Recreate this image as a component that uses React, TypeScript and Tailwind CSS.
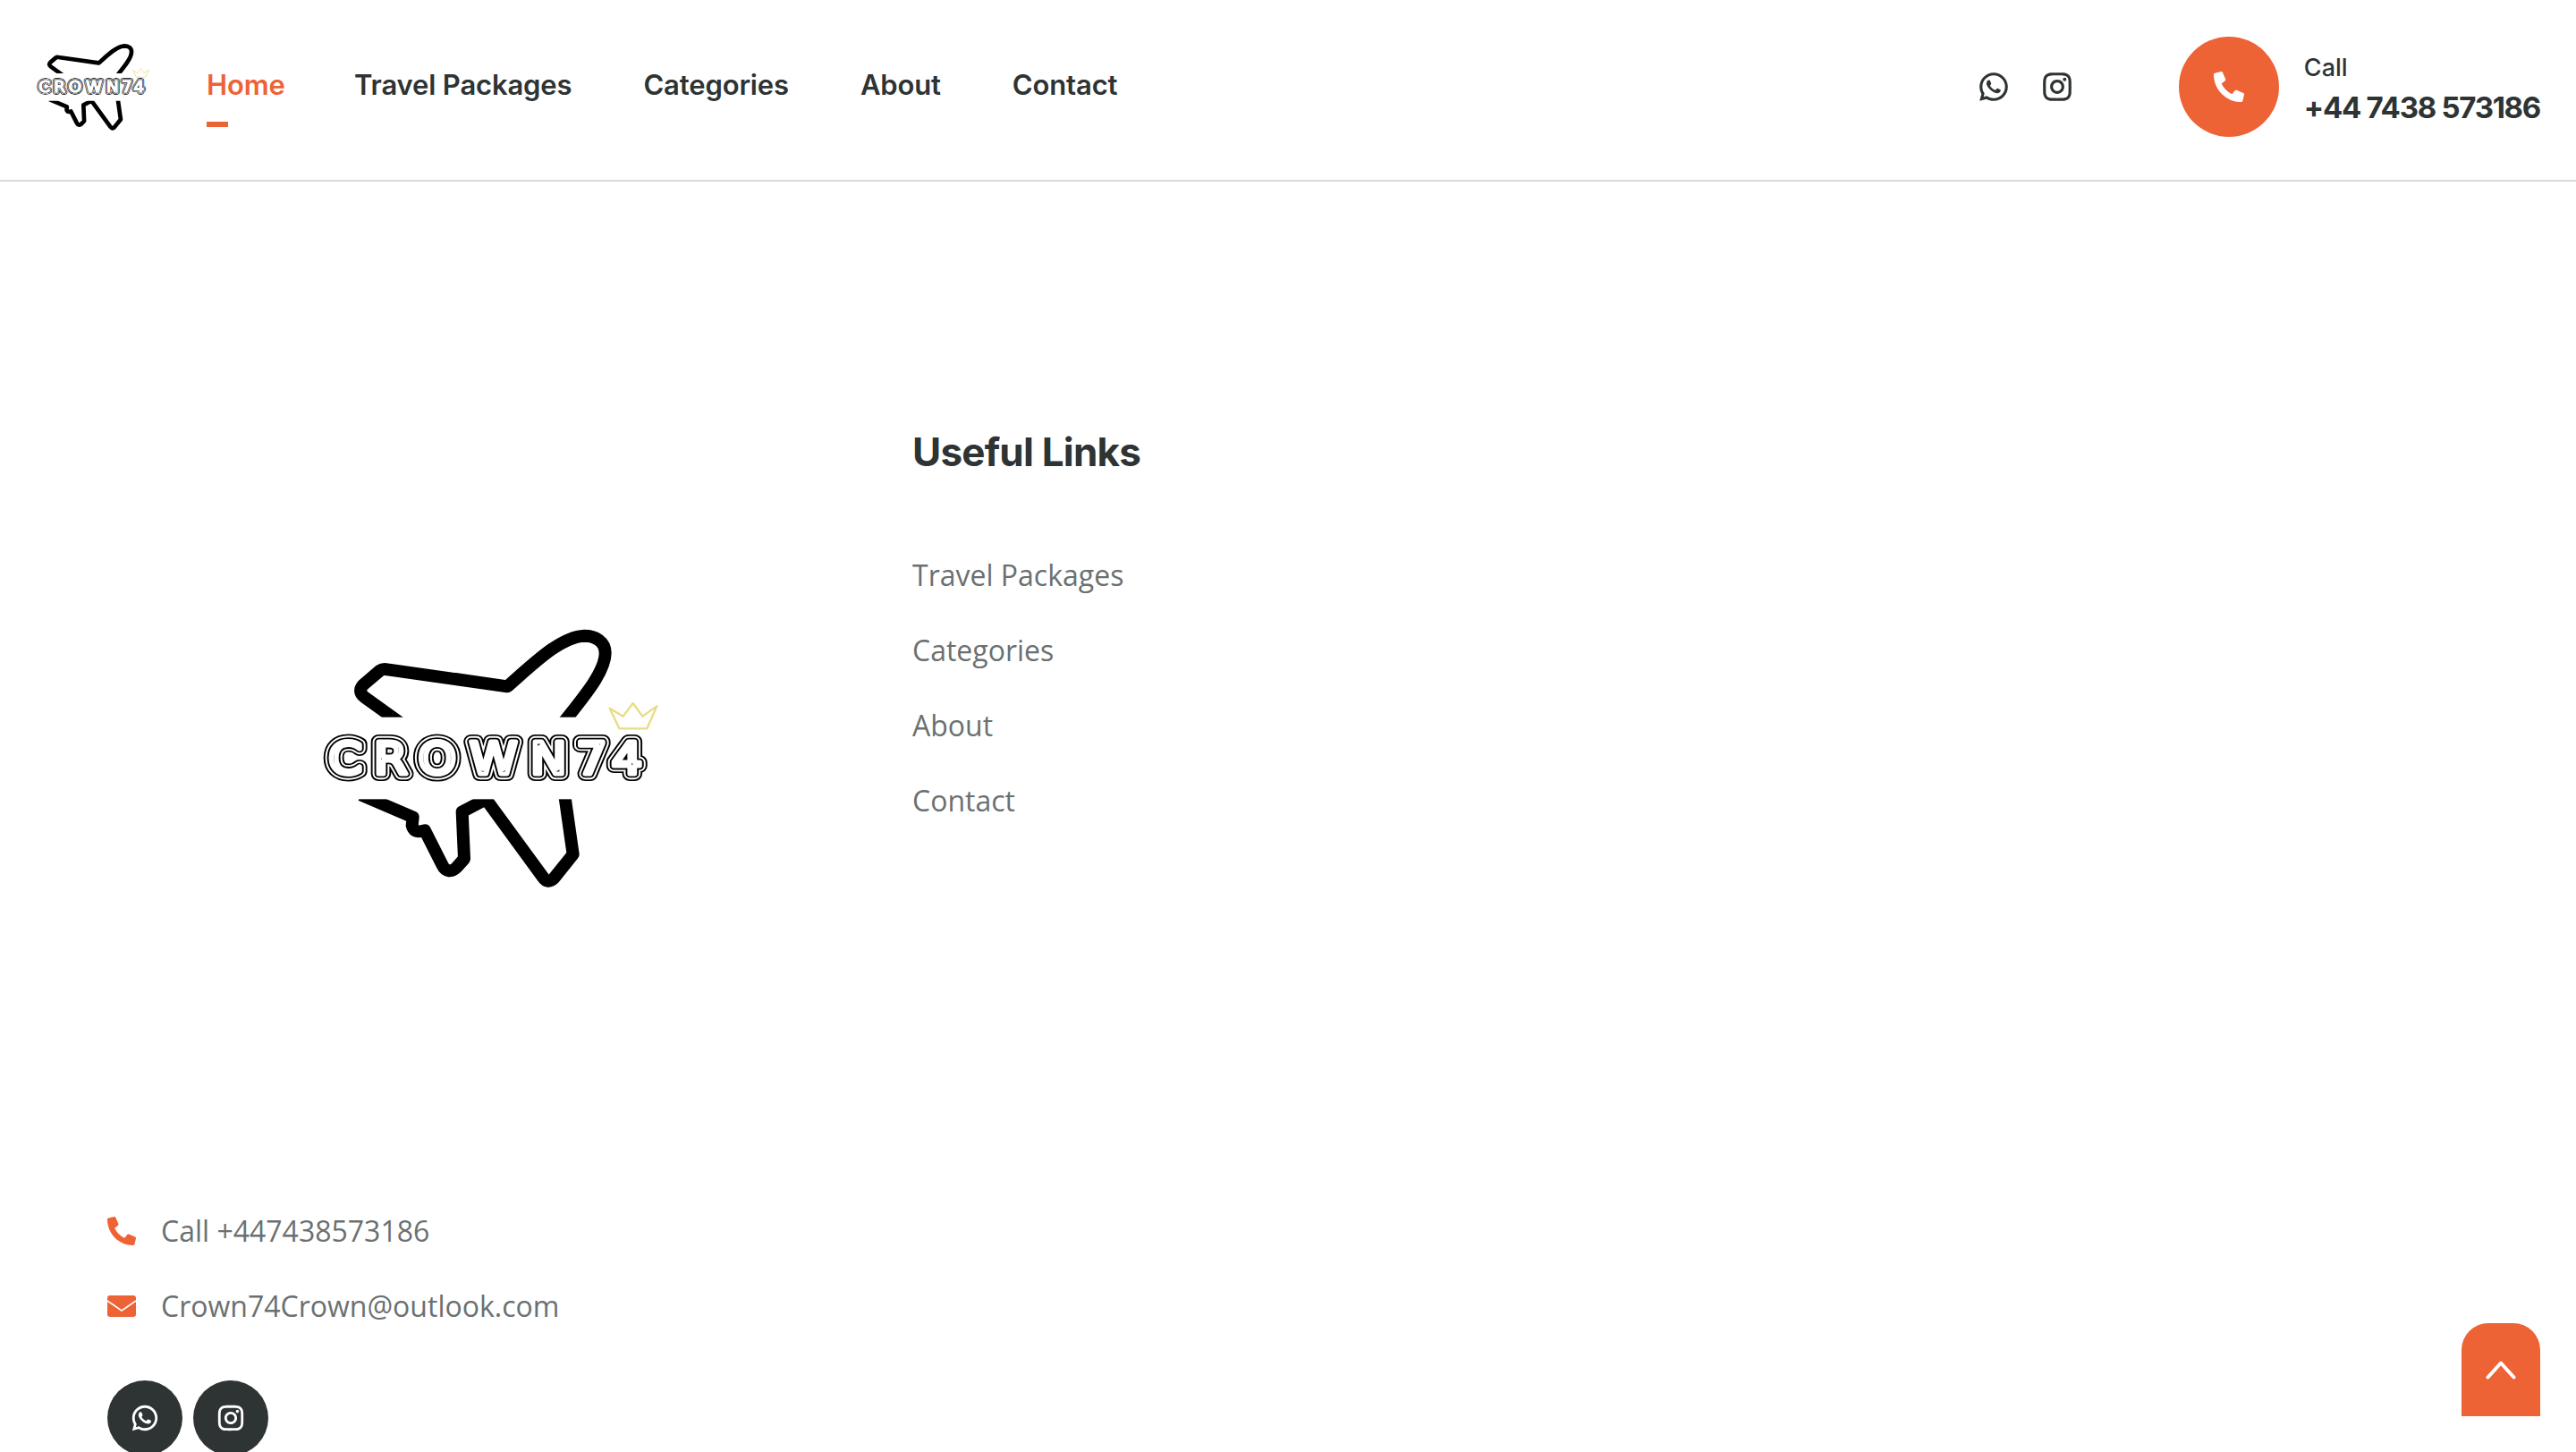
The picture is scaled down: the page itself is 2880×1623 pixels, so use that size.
import { useId } from "react";
import { FaPhoneAlt } from "react-icons/fa";
import { RiWhatsappLine, RiInstagramLine } from "react-icons/ri";

function Logo({ className }: { className: string }) {
  const id = useId().replace(/[^a-zA-Z0-9]/g, "");
  const wordId = `word${id}`;
  const layers: [number, string][] = [
    [48, "#000"],
    [37, "#fff"],
    [26, "#000"],
    [15, "#fff"],
  ];
  return (
    <svg viewBox="0 0 1260 990" className={className} role="img" aria-label="CROWN74">
      <defs>
        <text
          id={wordId}
          x="76 217 354 514 703 845 955"
          y="556"
          fontFamily="'DejaVu Sans', sans-serif"
          fontSize="150"
          transform="scale(1.08 1)"
        >
          CROWN74
        </text>
      </defs>
      <g fill="none" stroke="#000" strokeWidth="42" strokeLinejoin="round">
        <path d="M345 400 L203 298 C185 285 185 270 200 255 L255 208 C262 203 270 203 280 205 L682 262 C770 185 860 95 940 92 C975 92 1010 110 1010 150 C1010 210 945 290 860 395" />
        <path d="M190 625 L365 700 L362 728 C368 752 385 750 405 745 L463 860 C475 885 495 885 512 868 L537 840 L530 682 L610 640 L800 900 C812 918 825 918 838 905 L902 825 L870 600" />
      </g>
      <rect x="0" y="365" width="1260" height="275" fill="#fff" />
      {layers.map(([w, c]) => (
        <use
          key={w}
          href={`#${wordId}`}
          fill="none"
          stroke={c}
          strokeWidth={w}
          strokeLinejoin="round"
        />
      ))}
      <path
        d="M1057 403 L1025 335 L1070 362 L1103 318 L1135 362 L1183 328 L1150 403 Z"
        fill="none"
        stroke="#e8dc84"
        strokeWidth="7"
        strokeLinejoin="round"
      />
    </svg>
  );
}

const nav = ["Travel Packages", "Categories", "About", "Contact"];
const links = ["Travel Packages", "Categories", "About", "Contact"];

export default function App() {
  return (
    <div className="h-[1623px] overflow-hidden bg-white font-['Open_Sans',sans-serif] text-[#6b7070]">
      <header className="flex h-[203px] items-center border-b-2 border-[#d9d9d9] pb-[8px] pl-[34px] pr-[40px]">
        <Logo className="h-[111px] w-[141px] shrink-0" />
        <nav className="-mt-[3px] ml-[56px] flex items-center gap-[80px] font-['Inter',sans-serif] text-[31px] font-semibold tracking-[-0.15px] text-[#2e3333]">
          <a className="relative w-[85px] text-[#ee6336]">
            Home
            <span className="absolute left-0 top-[64px] h-[6px] w-[24px] bg-[#ee6336]" />
          </a>
          {nav.map((n) => (
            <a key={n}>{n}</a>
          ))}
        </nav>
        <div className="ml-auto flex items-center gap-[33px] text-[#2e3333]">
          <RiWhatsappLine className="h-[38px] w-[38px]" />
          <RiInstagramLine className="h-[38px] w-[38px]" />
        </div>
        <div className="ml-[117px] flex h-[112px] w-[112px] items-center justify-center rounded-full bg-[#ee6336] text-white">
          <FaPhoneAlt className="h-[34px] w-[34px]" />
        </div>
        <div className="ml-[28px] mt-[8px] font-['Inter',sans-serif] text-[#2e3333]">
          <div className="text-[27px] font-medium leading-[38px]">Call</div>
          <div className="text-[33px] font-bold leading-[50px] tracking-[-1.27px]">+44 7438 573186</div>
        </div>
      </header>

      <main className="grid grid-cols-[900px_1fr] pl-[120px] pt-[250px]">
        <div className="flex flex-col">
          <Logo className="ml-[220px] mt-[227px] h-[330px] w-[420px]" />
          <div className="mt-[342px] flex flex-col gap-[36px] text-[32px] leading-[48px]">
            <div className="flex items-center gap-[28px]">
              <FaPhoneAlt className="h-[32px] w-[32px] text-[#ee6336]" />
              <span>Call +447438573186</span>
            </div>
            <div className="flex items-center gap-[28px]">
              <svg viewBox="0 0 32 24" className="h-[24px] w-[32px]">
                <rect width="32" height="24" rx="3" fill="#ee6336" />
                <path d="M0 6 L16 17 L32 6" fill="none" stroke="#fff" strokeWidth="1.6" />
              </svg>
              <span>Crown74Crown@outlook.com</span>
            </div>
          </div>
          <div className="mt-[59px] flex gap-[12px]">
            <a className="flex h-[84px] w-[84px] items-center justify-center rounded-full bg-[#2e3333] text-white">
              <RiWhatsappLine className="h-[34px] w-[34px]" />
            </a>
            <a className="flex h-[84px] w-[84px] items-center justify-center rounded-full bg-[#2e3333] text-white">
              <RiInstagramLine className="h-[34px] w-[34px]" />
            </a>
          </div>
        </div>
        <div>
          <h3 className="mt-[24px] font-['Inter',sans-serif] text-[44px] font-bold leading-[56px] tracking-[-0.8px] text-[#2e3333]">
            Useful Links
          </h3>
          <ul className="mt-[86px] flex flex-col gap-[36px] text-[32px] leading-[48px]">
            {links.map((l) => (
              <li key={l}>{l}</li>
            ))}
          </ul>
        </div>
      </main>

      <button className="fixed bottom-[40px] right-[40px] flex h-[104px] w-[88px] items-center justify-center rounded-t-[30px] bg-[#ee6336] text-white">
        <svg viewBox="0 0 34 22" className="h-[22px] w-[34px]" fill="none" stroke="currentColor" strokeWidth="4" strokeLinecap="round" strokeLinejoin="round">
          <path d="M2.5 19.5 L17 3.5 L31.5 19.5" />
        </svg>
      </button>
    </div>
  );
}
